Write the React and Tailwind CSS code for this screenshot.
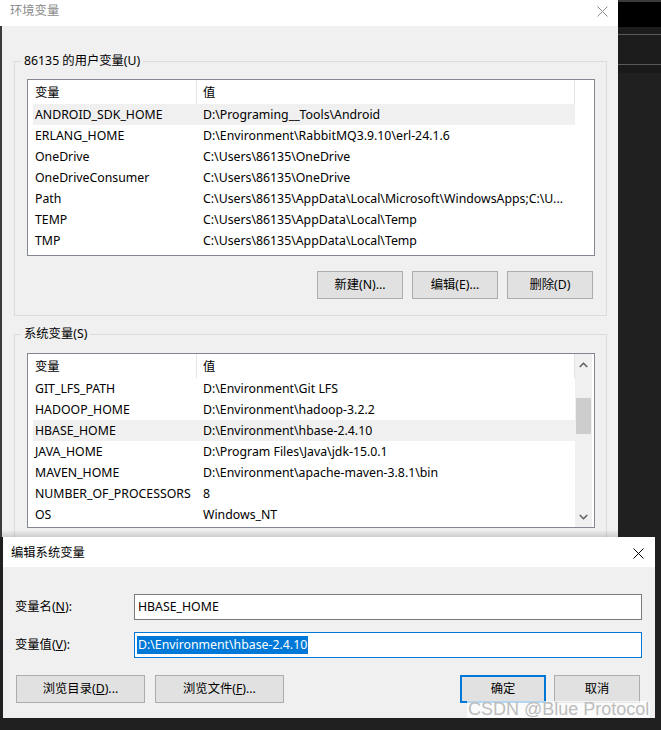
import React from "react";

const userVars = [
  ["ANDROID_SDK_HOME", "D:\\Programing__Tools\\Android"],
  ["ERLANG_HOME", "D:\\Environment\\RabbitMQ3.9.10\\erl-24.1.6"],
  ["OneDrive", "C:\\Users\\86135\\OneDrive"],
  ["OneDriveConsumer", "C:\\Users\\86135\\OneDrive"],
  ["Path", "C:\\Users\\86135\\AppData\\Local\\Microsoft\\WindowsApps;C:\\U..."],
  ["TEMP", "C:\\Users\\86135\\AppData\\Local\\Temp"],
  ["TMP", "C:\\Users\\86135\\AppData\\Local\\Temp"],
];

const systemVars = [
  ["GIT_LFS_PATH", "D:\\Environment\\Git LFS"],
  ["HADOOP_HOME", "D:\\Environment\\hadoop-3.2.2"],
  ["HBASE_HOME", "D:\\Environment\\hbase-2.4.10"],
  ["JAVA_HOME", "D:\\Program Files\\Java\\jdk-15.0.1"],
  ["MAVEN_HOME", "D:\\Environment\\apache-maven-3.8.1\\bin"],
  ["NUMBER_OF_PROCESSORS", "8"],
  ["OS", "Windows_NT"],
];

const CloseIcon = ({ className }) => (
  <svg width="11" height="11" viewBox="0 0 11 11" className={className}>
    <path d="M0.5 0.5 L10.5 10.5 M10.5 0.5 L0.5 10.5" stroke="currentColor" strokeWidth="1" />
  </svg>
);

const Chevron = ({ down }) => (
  <svg width="9" height="6" viewBox="0 0 9 6" className="text-[#606060]">
    <path
      d={down ? "M0.8 1 L4.5 4.7 L8.2 1" : "M0.8 5 L4.5 1.3 L8.2 5"}
      fill="none"
      stroke="currentColor"
      strokeWidth="1.6"
    />
  </svg>
);

const WinButton = ({ children, className = "" }) => (
  <button
    className={`h-[28px] bg-[#e1e1e1] border border-[#adadad] text-[12.3px] text-black flex items-center justify-center ${className}`}
  >
    {children}
  </button>
);

const Scrollbar = () => (
  <div className="w-[17px] bg-[#f0f0f0] flex flex-col items-center">
    <div className="h-[22px] flex items-center justify-center">
      <Chevron />
    </div>
    <div className="w-[15px] h-[36px] mt-[22px] bg-[#cdcdcd]" />
    <div className="flex-1" />
    <div className="h-[20px] flex items-center justify-center">
      <Chevron down />
    </div>
  </div>
);

const VarList = ({ rows, selected, scroll, height }) => (
  <div className={`${height} border border-[#828790] bg-white flex overflow-hidden`}>
    <div className="w-[547px] flex flex-col">
      <div className="h-[24px] flex shrink-0">
        <div className="w-[169px] border-r border-[#e5e5e5] pl-[7px] pt-[2px] flex items-center">变量</div>
        <div className="flex-1 border-r border-[#e5e5e5] pl-[6px] pt-[2px] flex items-center">值</div>
      </div>
      {rows.map(([name, value], i) => (
        <div
          key={name}
          className={`h-[21px] ml-[5px] pt-[2px] flex items-center shrink-0 whitespace-nowrap ${
            i === selected ? "bg-[#f0f0f0]" : ""
          }`}
        >
          <div className="w-[164px] pl-[2px] overflow-hidden">{name}</div>
          <div className="flex-1 pl-[6px] overflow-hidden">{value}</div>
        </div>
      ))}
    </div>
    {scroll ? <Scrollbar /> : <div className="flex-1" />}
  </div>
);

const GroupBox = ({ title, children, className = "" }) => (
  <fieldset className={`border border-[#dcdcdc] pl-[12px] pr-[11px] ${className}`}>
    <legend className="-ml-[6px] px-[3px] h-[20px] leading-[20px]">{title}</legend>
    {children}
  </fieldset>
);

const MainWindow = () => (
  <div className="w-[618px] flex flex-col">
    <div className="h-[26px] bg-white flex items-center justify-between pl-[10px] pr-[10px] pb-[4px] shrink-0">
      <span className="text-[#8c8c8c]">环境变量</span>
      <CloseIcon className="text-[#8c8c8c]" />
    </div>
    <div className="relative flex-1 bg-[#f0f0f0] border-l-2 border-[#3a3a3a] pl-[12px] pr-[11px] overflow-hidden">
      <GroupBox title="86135 的用户变量(U)" className="mt-[25px] pt-[8px] pb-[16px]">
        <VarList rows={userVars} selected={0} height="h-[177px]" />
        <div className="flex justify-end gap-[9px] mt-[15px] pr-[2px]">
          <WinButton className="w-[86px]">新建(N)...</WinButton>
          <WinButton className="w-[86px]">编辑(E)...</WinButton>
          <WinButton className="w-[86px]">删除(D)</WinButton>
        </div>
      </GroupBox>
      <GroupBox title="系统变量(S)" className="mt-[8px] pt-[9px] pb-[16px]">
        <VarList rows={systemVars} selected={2} scroll height="h-[175px]" />
      </GroupBox>
      <div className="absolute left-0 right-0 bottom-0 h-[7px] bg-gradient-to-b from-transparent to-black/15" />
    </div>
  </div>
);

const SideStrip = () => (
  <div className="flex-1 flex flex-col bg-[#202020]">
    <div className="h-[2px] bg-[#3a3a3a]" />
    <div className="h-[25px] bg-black" />
    <div className="h-[7px] bg-[#1c1c1c]" />
    <div className="h-[1px] bg-[#5a5a5a]" />
    <div className="h-[29px] bg-[#1c1c1c]" />
    <div className="h-[1px] bg-[#5a5a5a]" />
    <div className="h-[8px] bg-[#1a1a1a]" />
  </div>
);

const EditDialog = () => (
  <div className="w-[652px] flex flex-col">
    <div className="h-[30px] bg-white flex items-center justify-between pl-[8px] pr-[11px] pt-[2px] shrink-0">
      <span>编辑系统变量</span>
      <CloseIcon className="text-black" />
    </div>
    <div className="relative h-[151px] bg-[#f0f0f0] pl-[12px] pr-[13px] pt-[27px] overflow-hidden">
      <div className="flex items-center">
        <span className="w-[119px]">
          变量名(<u>N</u>):
        </span>
        <div className="flex-1 h-[26px] bg-white border border-[#7a7a7a] flex items-center pl-[3px]">
          HBASE_HOME
        </div>
      </div>
      <div className="flex items-center mt-[12px]">
        <span className="w-[119px]">
          变量值(<u>V</u>):
        </span>
        <div className="flex-1 h-[26px] bg-white border border-[#0078d7] flex items-center pl-[2px]">
          <span className="bg-[#0078d7] text-white leading-[18px] px-[1px]">D:\Environment\hbase-2.4.10</span>
        </div>
      </div>
      <div className="flex items-center mt-[17px] pl-[1px]">
        <WinButton className="w-[129px]">
          浏览目录(<u>D</u>)...
        </WinButton>
        <WinButton className="w-[129px] ml-[10px]">
          浏览文件(<u>F</u>)...
        </WinButton>
        <div className="flex-1" />
        <WinButton className="w-[86px] !border-2 !border-[#0078d7]">确定</WinButton>
        <WinButton className="w-[86px] ml-[8px] mr-[2px]">取消</WinButton>
      </div>
      <span className="absolute left-[464px] top-[134px] px-[1px] bg-white/70 text-[18px] leading-[17px] text-[#bdbdbd] font-['Liberation_Sans',sans-serif]">
        CSDN @Blue Protocol
      </span>
    </div>
  </div>
);

export default function App() {
  return (
    <div className="w-[661px] h-[730px] bg-[#202020] overflow-hidden text-[12.3px] text-black font-['Noto_Sans','Noto_Sans_CJK_SC',sans-serif]">
      <div className="flex h-[537px]">
        <MainWindow />
        <SideStrip />
      </div>
      <div className="flex h-[181px] pl-[3px]">
        <EditDialog />
      </div>
    </div>
  );
}
